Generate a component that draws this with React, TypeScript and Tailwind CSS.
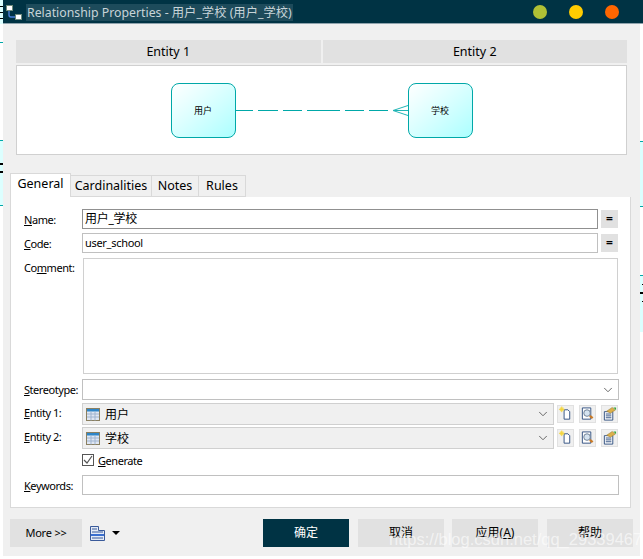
import { ChevronDown } from 'lucide-react';

const font = 'font-["Noto_Sans","Noto_Sans_CJK_SC",sans-serif]';

function TableIcon() {
  return (
    <svg width="14" height="13" viewBox="0 0 14 13" className="shrink-0">
      <rect x="0.5" y="0.5" width="13" height="12" fill="#dfe6f2" stroke="#8a7f60" />
      <rect x="1" y="1" width="12" height="2.5" fill="#2f86c8" />
      <path d="M1 6h12M1 9h12M5 3.5v9M9 3.5v9" stroke="#9fb4d0" strokeWidth="1" />
    </svg>
  );
}

function NewIcon() {
  return (
    <svg width="16" height="16" viewBox="0 0 16 16">
      <path d="M6.5 3.5h4l2 2v8h-6z" fill="#fff" stroke="#2f4f80" />
      <rect x="2" y="1" width="4" height="4" fill="#f6e26a" />
      <path d="M1 3h6M4 0v6" stroke="#f3d23e" strokeWidth="1" />
    </svg>
  );
}

function FindIcon() {
  return (
    <svg width="16" height="16" viewBox="0 0 16 16">
      <path d="M2.5 1.5h9v12h-9z" fill="#fff" stroke="#2f4f80" />
      <circle cx="7.5" cy="7" r="3.5" fill="#d5e3f0" stroke="#6c7d92" />
      <path d="M10.5 10l3 2.5" stroke="#c87a28" strokeWidth="2.5" />
    </svg>
  );
}

function PropsIcon() {
  return (
    <svg width="16" height="16" viewBox="0 0 16 16">
      <path d="M2.5 5.5h9v9h-9z" fill="#fff" stroke="#2f4f80" />
      <path d="M4 8h6M4 10h6M4 12h6" stroke="#2f4f80" />
      <path d="M5 5l6-4 3 3-5 3z" fill="#dcb04a" stroke="#9c7a2a" strokeWidth="0.6" />
      <path d="M12 1l3 0 0 3z" fill="#3aa53a" />
    </svg>
  );
}

function SmallButton({ children }: { children: React.ReactNode }) {
  return <div className="flex h-[18px] w-[17px] items-center justify-center bg-[#f0f0f0] border border-[#e1e1e1]">{children}</div>;
}

function EqualsButton() {
  return (
    <div className="flex h-[18px] w-[17px] items-center justify-center bg-[#e1e1e1] text-[12px] font-bold leading-none text-black">=</div>
  );
}

function Label({ children, first }: { children: string; first?: number }) {
  const i = first ?? 0;
  return (
    <span className="w-[58px] shrink-0 text-[11px] leading-none tracking-[-0.45px] text-black">
      {children.slice(0, i)}
      <span className="underline">{children[i]}</span>
      {children.slice(i + 1)}
    </span>
  );
}

function EntityRow({ label, value }: { label: string; value: string }) {
  return (
    <div className="flex h-[22px] items-center">
      <div className="mb-[3px] flex w-[58px] shrink-0"><Label>{label}</Label></div>
      <div className="flex h-full w-[472px] items-center border border-[#d0d0d0] bg-[#f0f0f0] pl-[3px] pr-[3px]">
        <TableIcon />
        <span className="ml-[5px] mt-[2px] text-[12px] text-black">{value}</span>
        <ChevronDown className="ml-auto h-3.5 w-3.5 text-[#555]" strokeWidth={1.5} />
      </div>
      <div className="ml-[3px] flex gap-[5px]">
        <SmallButton><NewIcon /></SmallButton>
        <SmallButton><FindIcon /></SmallButton>
        <SmallButton><PropsIcon /></SmallButton>
      </div>
    </div>
  );
}

function ErNode({ text }: { text: string }) {
  return (
    <div className="flex h-[55px] w-[65px] items-center justify-center rounded-[8px] border border-[#00a8a8] bg-gradient-to-br from-white to-[#aaffff] pt-px text-[9px] text-black">
      {text}
    </div>
  );
}

function BottomButton({ children, primary }: { children: React.ReactNode; primary?: boolean }) {
  return (
    <div className={primary ? 'flex h-[28px] w-[86px] items-center justify-center bg-[#003344] text-[12px] text-white' : 'flex h-[28px] w-[86px] items-center justify-center bg-[#e1e1e1] text-[12px] text-black'}>
      {children}
    </div>
  );
}

function LeftStrip() {
  return (
    <div className="flex h-[559px] w-[3px] shrink-0 flex-col">
      <div className="flex h-[24px] flex-col items-start gap-[5px] bg-[#dcffff] pt-[6px]">
        <div className="h-px w-full bg-black" />
        <div className="h-px w-full bg-black" />
        <div className="h-px w-full bg-black" />
      </div>
      <div className="h-[18px] bg-white" />
      <div className="h-px bg-[#00a8a8]" />
      <div className="h-[97px] bg-white" />
      <div className="h-px bg-[#00a8a8]" />
      <div className="flex h-[64px] flex-col gap-[6px] bg-[#dcffff] pt-[22px]">
        <div className="h-[2px] w-full bg-black" />
        <div className="h-[2px] w-full bg-black" />
      </div>
      <div className="h-px bg-[#00a8a8]" />
    </div>
  );
}

function RightStrip() {
  return (
    <div className="flex w-[3px] shrink-0 flex-col">
      <div className="h-[117px] bg-white" />
      <div className="h-px bg-[#00a8a8]" />
      <div className="h-[64px] bg-[#dcffff]" />
      <div className="h-px bg-[#00a8a8]" />
      <div className="h-[68px] bg-white" />
      <div className="h-px bg-[#00a8a8]" />
      <div className="flex h-[56px] flex-col gap-[7px] bg-[#dcffff] pt-[8px]">
        <div className="ml-[2px] h-px bg-black" />
        <div className="h-[2px] bg-black" />
        <div className="ml-[2px] h-px bg-black" />
      </div>
    </div>
  );
}

export default function App() {
  return (
    <div className={`relative flex h-[559px] w-[643px] overflow-hidden bg-white ${font}`}>
      <LeftStrip />
      <div className="flex min-w-0 flex-1 flex-col">
        {/* title bar */}
        <div className="flex h-[24px] shrink-0 items-center border-b border-[#8fa3ad] bg-[#003344] pl-[3px]">
          <svg width="18" height="18" viewBox="0 0 18 18" className="shrink-0">
            <rect x="0.5" y="2.5" width="6" height="5" fill="#fff" stroke="#6f8a7a" />
            <rect x="9.5" y="11.5" width="6" height="5" fill="#fff" stroke="#6f8a7a" />
            <path d="M3 8v4q0 2 2 2h4" fill="none" stroke="#4a7fd8" strokeWidth="1.4" />
          </svg>
          <span className="ml-[2px] mt-px bg-[#1d4b5b] px-px text-[12.3px] leading-[17px] whitespace-nowrap text-[#c8d4d8]">
            Relationship Properties - 用户_学校 (用户_学校)
          </span>
          <div className="ml-auto mr-[24px] flex gap-[22px]">
            <div className="h-[14px] w-[14px] rounded-full bg-[#b0c035]" />
            <div className="h-[14px] w-[14px] rounded-full bg-[#ffcc00]" />
            <div className="h-[14px] w-[14px] rounded-full bg-[#ff6600]" />
          </div>
        </div>

        <div className="flex flex-1">
          <div className="flex h-[532px] w-[637px] shrink-0 flex-col bg-[#f0f0f0]">
            {/* entity headers */}
            <div className="ml-[13px] mt-[16px] flex w-[611px] gap-[2px]">
              <div className="flex h-[23px] flex-1 items-center justify-center bg-[#e1e1e1] pt-[2px] text-[12.5px] text-black">Entity 1</div>
              <div className="flex h-[23px] flex-1 items-center justify-center bg-[#e1e1e1] pt-[2px] text-[12.5px] text-black">Entity 2</div>
            </div>

            {/* diagram */}
            <div className="ml-[13px] mt-[2px] flex h-[90px] w-[611px] items-center justify-center border border-[#d0d0d0] bg-white">
              <ErNode text="用户" />
              <svg width="172" height="20" viewBox="0 0 172 20" className="shrink-0">
                <path d="M0 10.5h17M22 10.5h20M47 10.5h19M71 10.5h33M109 10.5h19M133 10.5h19" stroke="#00a8a8" strokeWidth="1" />
                <path d="M172 5.5L157 10.5L172 15.5M157 10.5h15" fill="none" stroke="#22b5b5" strokeWidth="1" />
              </svg>
              <ErNode text="学校" />
            </div>

            {/* tabs */}
            <div className="ml-[7px] mt-[18px] flex h-[24px] items-end">
              <div className="flex h-[24px] w-[61px] items-center justify-center border border-b-0 border-[#d9d9d9] bg-white pb-[2px] text-[12.5px] text-black">General</div>
              <div className="flex h-[22px] w-[81px] items-center justify-center border border-l-0 border-[#d9d9d9] bg-[#f0f0f0] text-[12.5px] text-black">Cardinalities</div>
              <div className="flex h-[22px] w-[47px] items-center justify-center border border-l-0 border-[#d9d9d9] bg-[#f0f0f0] text-[12.5px] text-black">Notes</div>
              <div className="flex h-[22px] w-[47px] items-center justify-center border border-l-0 border-[#d9d9d9] bg-[#f0f0f0] text-[12.5px] text-black">Rules</div>
            </div>

            {/* tab panel */}
            <div className="ml-[7px] flex h-[311px] w-[621px] flex-col border border-t-0 border-[#d9d9d9] bg-white pl-[13px] pt-[12px]">
              <div className="flex h-[20px] items-center">
                <Label>Name:</Label>
                <div className="flex h-full w-[516px] items-center border border-[#909090] pl-[2px] text-[12px] tracking-[-0.3px] text-black">用户_学校</div>
                <div className="ml-[3px]"><EqualsButton /></div>
              </div>
              <div className="mt-[4px] flex h-[20px] items-center">
                <Label>Code:</Label>
                <div className="flex h-full w-[516px] items-center border border-[#c0c0c0] pl-[2px] text-[11px] tracking-[-0.3px] text-black">user_school</div>
                <div className="ml-[3px]"><EqualsButton /></div>
              </div>
              <div className="mt-[5px] flex">
                <span className="w-[59px] shrink-0 pt-[4px] text-[11px] leading-none tracking-[-0.45px] text-black">
                  Co<span className="underline">m</span>ment:
                </span>
                <div className="h-[116px] w-[535px] border border-[#d0d0d0]" />
              </div>
              <div className="mt-[5px] flex h-[21px] items-center">
                <Label>Stereotype:</Label>
                <div className="flex h-full w-[537px] items-center justify-end border border-[#c0c0c0] pr-[3px]">
                  <ChevronDown className="h-3.5 w-3.5 text-[#555]" strokeWidth={1.5} />
                </div>
              </div>
              <div className="mt-[3px]"><EntityRow label="Entity 1:" value="用户" /></div>
              <div className="mt-[2px]"><EntityRow label="Entity 2:" value="学校" /></div>
              <div className="ml-[58px] mt-[5px] flex h-[12px] items-center">
                <div className="flex h-[12px] w-[12px] items-center justify-center border border-[#555] bg-white">
                  <svg width="10" height="10" viewBox="0 0 10 10">
                    <path d="M1 5l3 3 5-7" fill="none" stroke="#555" strokeWidth="1.2" />
                  </svg>
                </div>
                <span className="ml-[4px] text-[11px] leading-none tracking-[-0.45px] text-black"><span className="underline">G</span>enerate</span>
              </div>
              <div className="mt-[9px] flex h-[20px] items-center">
                <Label>Keywords:</Label>
                <div className="h-full w-[537px] border border-[#c0c0c0]" />
              </div>
            </div>

            {/* bottom buttons */}
            <div className="ml-[7px] mt-[11px] flex items-center">
              <div className="flex h-[28px] w-[72px] items-center justify-center bg-[#e1e1e1] text-[11px] tracking-[-0.2px] text-black">More &gt;&gt;</div>
              <svg width="15" height="15" viewBox="0 0 15 15" className="ml-[8px] shrink-0">
                <path d="M0.5 0.5h8v4h6v10h-14z" fill="#e4ebf6" stroke="#3a5a9a" />
                <rect x="1" y="8" width="13" height="2" fill="#3a6fd0" />
                <path d="M2 3h5M2 6h11M2 12h11" stroke="#3a5a9a" />
              </svg>
              <svg width="8" height="4" viewBox="0 0 8 4" className="ml-[7px] shrink-0">
                <path d="M0 0h8L4 4z" fill="#000" />
              </svg>
              <div className="ml-[143px] flex">
                <BottomButton primary>确定</BottomButton>
                <div className="ml-[9px]"><BottomButton>取消</BottomButton></div>
                <div className="ml-[8px]"><BottomButton>应用(<span className="underline">A</span>)</BottomButton></div>
                <div className="ml-[9px]"><BottomButton>帮助</BottomButton></div>
              </div>
            </div>
          </div>
          <RightStrip />
        </div>
      </div>

      {/* csdn watermark */}
      <span className='absolute left-[389px] top-[527px] font-["Liberation_Sans",sans-serif] text-[16.5px] whitespace-nowrap text-white/60'>
        https://blog.csdn.net/qq_29339467
      </span>
    </div>
  );
}
